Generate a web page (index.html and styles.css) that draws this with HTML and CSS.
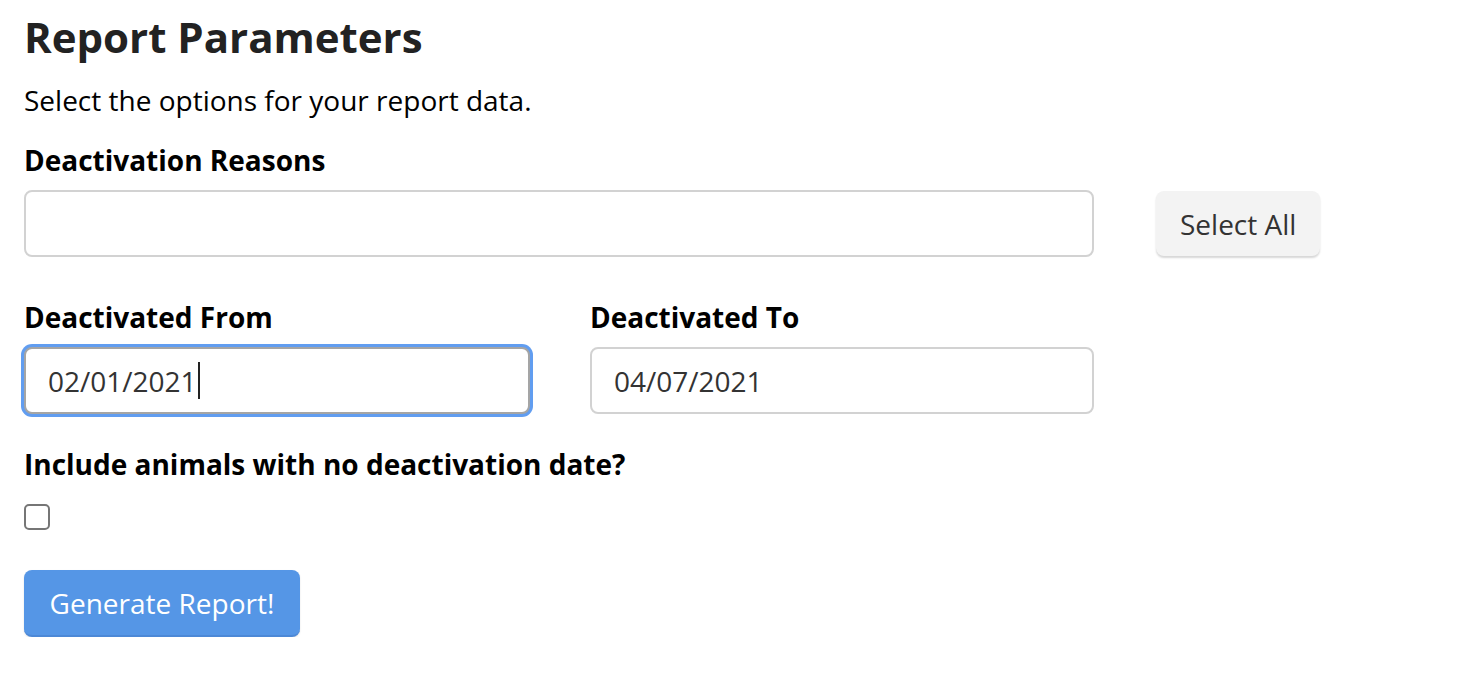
FILE: index.html
```html
<!DOCTYPE html>
<html lang="en">
<head>
<meta charset="utf-8">
<title>Report Parameters</title>
<link rel="stylesheet" href="styles.css">
</head>
<body>
<main class="page">
  <h1 class="title">Report Parameters</h1>
  <p class="intro">Select the options for your report data.</p>

  <section class="group group-reasons">
    <label class="label" for="reasons">Deactivation Reasons</label>
    <div class="row">
      <input id="reasons" class="input span-2" type="text">
      <button class="btn btn-light" type="button">Select All</button>
    </div>
  </section>

  <section class="row group-dates">
    <div class="field">
      <label class="label">Deactivated From</label>
      <div class="input focused" role="textbox">02/01/2021<span class="caret"></span></div>
    </div>
    <div class="field">
      <label class="label" for="to">Deactivated To</label>
      <input id="to" class="input" type="text" value="04/07/2021">
    </div>
  </section>

  <section class="group group-check">
    <label class="label" for="nodate">Include animals with no deactivation date?</label>
    <input id="nodate" class="checkbox" type="checkbox">
  </section>

  <button class="btn btn-primary" type="button">Generate Report!</button>
</main>
</body>
</html>
```

FILE: styles.css
```css
html, body {
  margin: 0;
  padding: 0;
  background: #ffffff;
}

body {
  font-family: "Open Sans", "Liberation Sans", sans-serif;
  color: #000;
}

.page {
  padding: 14px 24px 0 24px;
}

.title {
  margin: 0;
  font-size: 42px;
  line-height: 46px;
  font-weight: 700;
  color: #222;
}

.intro {
  margin: 22px 0 0 0;
  font-size: 28px;
  line-height: 36px;
}

.label {
  display: block;
  font-size: 28px;
  line-height: 36px;
  font-weight: 700;
  color: #000;
}

.group-reasons {
  margin-top: 24px;
}

.row {
  display: grid;
  grid-template-columns: 506px 504px auto;
  column-gap: 60px;
  align-items: start;
}

.group-reasons .row {
  margin-top: 12px;
}

.span-2 {
  grid-column: 1 / 3;
}

.input {
  box-sizing: border-box;
  display: block;
  width: 100%;
  height: 67px;
  margin: 0;
  padding: 0 22px;
  border: 2px solid #d2d2d2;
  border-radius: 8px;
  background: #fff;
  font-family: "Open Sans", "Liberation Sans", sans-serif;
  font-size: 28px;
  color: #333;
  outline: none;
}

div.input {
  display: flex;
  align-items: center;
}

.focused {
  border-color: #a5a5a5;
  box-shadow: 0 0 0 3px #619df0;
}

.caret {
  display: inline-block;
  width: 2px;
  height: 37px;
  margin-left: 1px;
  background: #222;
}

.group-dates {
  margin-top: 42px;
}

.field .input {
  margin-top: 12px;
}

.group-check {
  margin-top: 32px;
}

.checkbox {
  appearance: none;
  -webkit-appearance: none;
  display: block;
  box-sizing: border-box;
  width: 26px;
  height: 26px;
  margin: 22px 0 0 0;
  border: 2px solid #767676;
  border-radius: 5px;
  background: #fff;
}

.btn {
  box-sizing: border-box;
  height: 66px;
  border: none;
  border-radius: 8px;
  font-family: "Open Sans", "Liberation Sans", sans-serif;
  font-size: 28px;
  cursor: pointer;
}

.btn-light {
  justify-self: start;
  margin-left: 2px;
  margin-top: 1px;
  height: 65px;
  padding: 0 24px;
  background: #f3f3f3;
  color: #333;
  box-shadow: 0 2px 2px rgba(0, 0, 0, 0.16);
}

.btn-primary {
  display: block;
  margin-top: 40px;
  width: 276px;
  height: 67px;
  padding: 0;
  background: #5596e6;
  color: #fff;
  border-bottom: 2px solid #4c88d6;
  box-shadow: 0 1px 2px rgba(0, 0, 0, 0.12);
}
```
